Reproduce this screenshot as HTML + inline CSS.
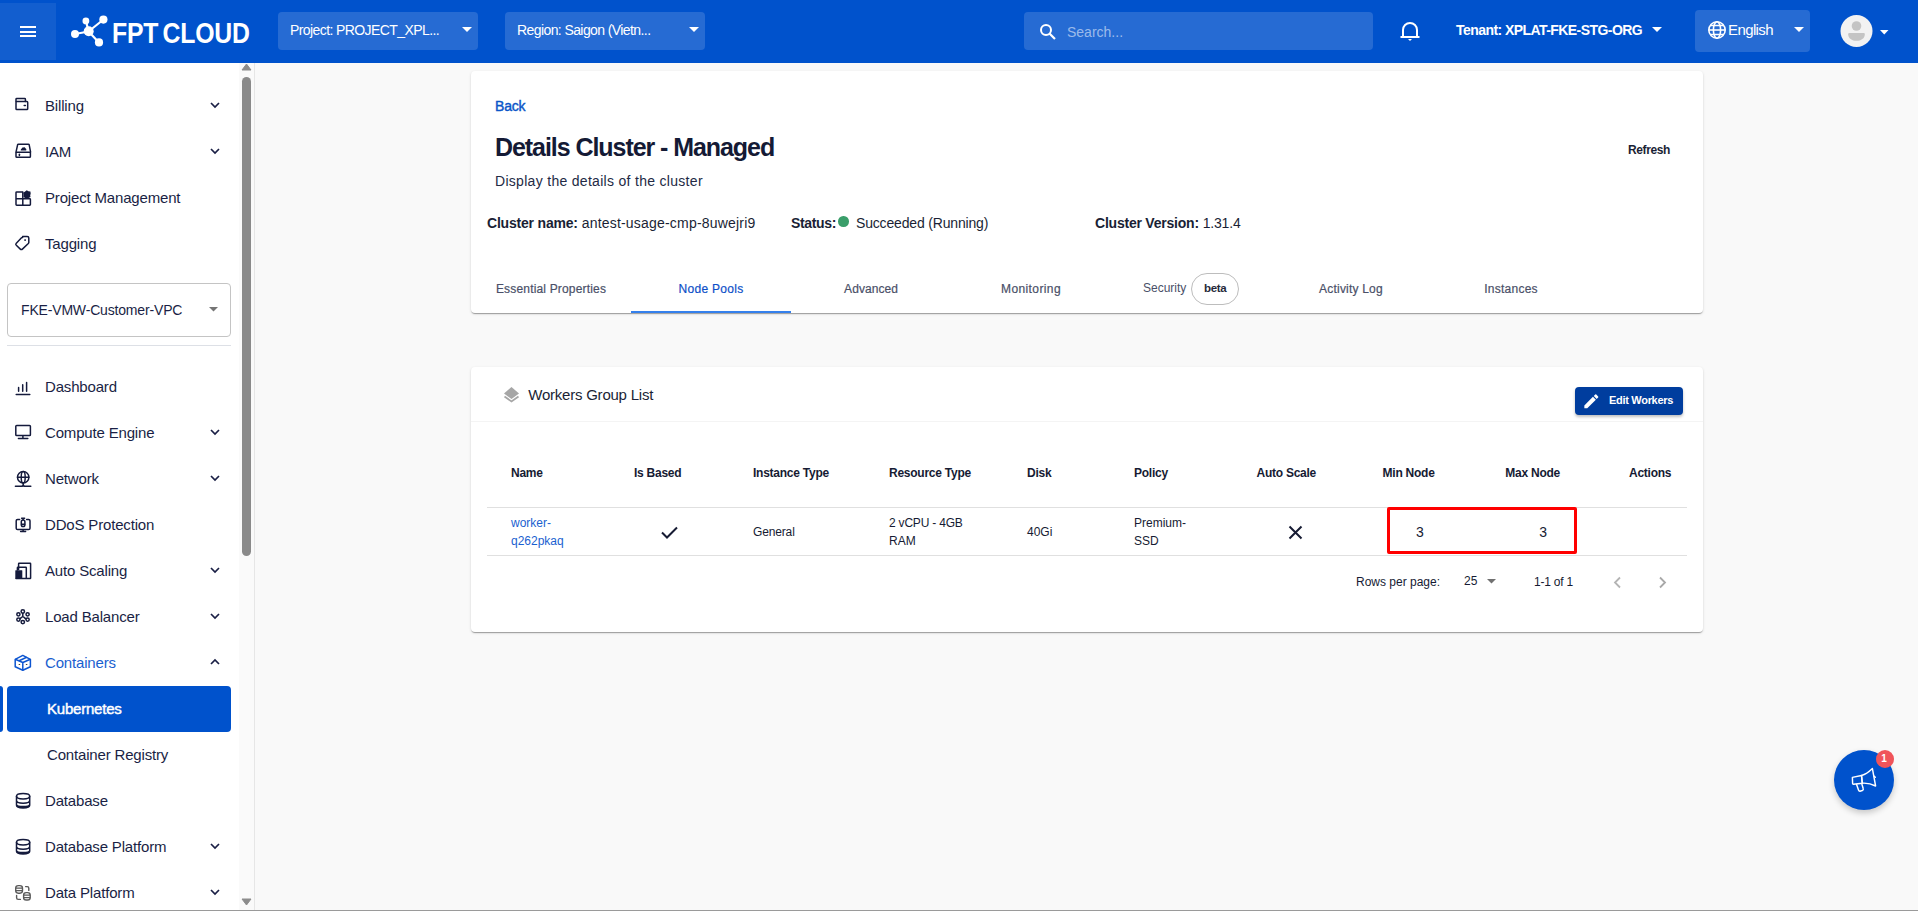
<!DOCTYPE html>
<html><head><meta charset="utf-8"><title>FPT Cloud</title>
<style>
html,body{margin:0;padding:0;width:1918px;height:911px;overflow:hidden;background:#f9f9f9;font-family:"Liberation Sans",sans-serif;}
.a{position:absolute;box-sizing:border-box}
svg.a{box-sizing:content-box;overflow:visible}
.t{position:absolute;white-space:nowrap;line-height:1;font-family:"Liberation Sans",sans-serif}
</style></head><body>
<div class="a" style="left:0px;top:0px;width:1918px;height:63px;background:#0052cc"></div>
<div class="a" style="left:0px;top:3px;width:56px;height:57px;background:rgba(255,255,255,0.07)"></div>
<div class="a" style="left:19.5px;top:26px;width:16px;height:2px;background:#fff"></div>
<div class="a" style="left:19.5px;top:30.5px;width:16px;height:2px;background:#fff"></div>
<div class="a" style="left:19.5px;top:35px;width:16px;height:2px;background:#fff"></div>
<svg class="a" style="left:68px;top:12px" width="44" height="40" viewBox="68 12 44 40">
<g stroke="#fff" stroke-width="2.2" fill="none"><line x1="75" y1="34" x2="88.5" y2="31.5"/><line x1="86" y1="21" x2="88.5" y2="31.5"/><line x1="103.5" y1="19.5" x2="88.5" y2="31.5"/><line x1="99" y1="42.5" x2="88.5" y2="31.5"/></g>
<g fill="#fff"><circle cx="75" cy="34" r="4"/><circle cx="88.7" cy="31.3" r="5"/><circle cx="85.9" cy="20.9" r="3.4"/><circle cx="103.4" cy="19.6" r="4.1"/><circle cx="99" cy="42.4" r="4.1"/></g></svg>
<div class="t" style="left:112.0px;top:18.8px;font-size:29px;font-weight:700;color:#fff;letter-spacing:-0.2px;transform:scaleX(0.855);transform-origin:0 0;word-spacing:-3px;">FPT CLOUD</div>
<div class="a" style="left:278px;top:12px;width:200px;height:37.5px;background:rgba(255,255,255,0.15);border-radius:4px"></div>
<div class="t" style="left:290.0px;top:23.1px;font-size:14px;font-weight:400;color:#fff;letter-spacing:-0.59px;">Project: PROJECT_XPL...</div>
<svg class="a" style="left:462px;top:27px" width="10" height="6"><path d="M0 0h10L5 5z" fill="#fff"/></svg>
<div class="a" style="left:505px;top:12px;width:200px;height:37.5px;background:rgba(255,255,255,0.15);border-radius:4px"></div>
<div class="t" style="left:517.0px;top:23.1px;font-size:14px;font-weight:400;color:#fff;letter-spacing:-0.59px;">Region: Saigon (Vietn...</div>
<svg class="a" style="left:689px;top:27px" width="10" height="6"><path d="M0 0h10L5 5z" fill="#fff"/></svg>
<div class="a" style="left:1024px;top:12px;width:349px;height:37.5px;background:rgba(255,255,255,0.15);border-radius:4px"></div>
<svg class="a" style="left:1039px;top:23px" width="18" height="18" viewBox="0 0 18 18"><circle cx="7" cy="7" r="5" stroke="#fff" stroke-width="2" fill="none"/><line x1="10.5" y1="10.5" x2="16" y2="16" stroke="#fff" stroke-width="2.2"/></svg>
<div class="t" style="left:1067.0px;top:25.1px;font-size:14px;font-weight:400;color:rgba(255,255,255,0.55);letter-spacing:0px;">Search...</div>
<svg class="a" style="left:1399px;top:20px" width="22" height="22" viewBox="0 0 22 22"><path d="M4 17V10a7 7 0 0 1 14 0v7" stroke="#fff" stroke-width="2" fill="none"/><line x1="1.5" y1="17" x2="20.5" y2="17" stroke="#fff" stroke-width="2"/><path d="M9 19h4l-2 2z" fill="#fff"/></svg>
<div class="t" style="left:1456.0px;top:23.1px;font-size:14px;font-weight:700;color:#fff;letter-spacing:-0.56px;">Tenant: XPLAT-FKE-STG-ORG</div>
<svg class="a" style="left:1652px;top:27px" width="10" height="6"><path d="M0 0h10L5 5z" fill="#fff"/></svg>
<div class="a" style="left:1695px;top:10px;width:115px;height:42px;background:rgba(255,255,255,0.15);border-radius:4px"></div>
<svg class="a" style="left:1707.4px;top:20.3px" width="20" height="20" viewBox="0 0 20 20"><g stroke="#fff" stroke-width="1.6" fill="none"><circle cx="10" cy="10" r="8.2"/><ellipse cx="10" cy="10" rx="3.6" ry="8.2"/><line x1="1.8" y1="10" x2="18.2" y2="10"/><path d="M3 5.5h14M3 14.5h14"/></g></svg>
<div class="t" style="left:1728.0px;top:21.6px;font-size:15px;font-weight:400;color:#fff;letter-spacing:-0.6px;">English</div>
<svg class="a" style="left:1794px;top:27px" width="10" height="6"><path d="M0 0h10L5 5z" fill="#fff"/></svg>
<svg class="a" style="left:1840px;top:15px" width="33" height="33" viewBox="0 0 33 33"><circle cx="16.5" cy="16" r="16" fill="#f2f2f2"/><circle cx="16.5" cy="11" r="4.8" fill="#c4c4c4"/><path d="M9 18h15c0 0 .8 .2 .8 1.2c0 4.2-3.7 6.6-8.3 6.6s-8.3-2.4-8.3-6.6c0-1 .8-1.2.8-1.2z" fill="#c4c4c4"/></svg>
<svg class="a" style="left:1879.5px;top:29.5px" width="10" height="6"><path d="M0 0h8.5L4.25 4.5z" fill="#fff"/></svg>
<div class="a" style="left:0px;top:63px;width:254px;height:847px;background:#fff"></div>
<div class="a" style="left:239px;top:63px;width:15px;height:847px;background:#fafafa"></div>
<div class="a" style="left:254px;top:63px;width:1px;height:847px;background:#e6e6e6"></div>
<svg class="a" style="left:241px;top:63.2px" width="11" height="8"><path d="M1 7h9L5.5 1z" fill="#8c8c8c" stroke="#8c8c8c" stroke-linejoin="round"/></svg>
<svg class="a" style="left:241px;top:898px" width="11" height="8"><path d="M1 1h9L5.5 7z" fill="#8c8c8c" stroke="#8c8c8c" stroke-linejoin="round"/></svg>
<div class="a" style="left:242px;top:77px;width:9px;height:479px;background:#8a8a8a;border-radius:4.5px"></div>
<div class="t" style="left:45.0px;top:98.3px;font-size:15px;font-weight:400;color:#1a1f45;letter-spacing:-0.17px;">Billing</div>
<svg class="a" style="left:210px;top:101.5px" width="10" height="7"><path d="M1 1L5 5L9 1" stroke="#1a1f45" stroke-width="1.7" fill="none"/></svg>
<div class="t" style="left:45.0px;top:144.3px;font-size:15px;font-weight:400;color:#1a1f45;letter-spacing:-0.17px;">IAM</div>
<svg class="a" style="left:210px;top:147.5px" width="10" height="7"><path d="M1 1L5 5L9 1" stroke="#1a1f45" stroke-width="1.7" fill="none"/></svg>
<div class="t" style="left:45.0px;top:190.3px;font-size:15px;font-weight:400;color:#1a1f45;letter-spacing:-0.17px;">Project Management</div>
<div class="t" style="left:45.0px;top:236.3px;font-size:15px;font-weight:400;color:#1a1f45;letter-spacing:-0.17px;">Tagging</div>
<div class="t" style="left:45.0px;top:379.3px;font-size:15px;font-weight:400;color:#1a1f45;letter-spacing:-0.17px;">Dashboard</div>
<div class="t" style="left:45.0px;top:425.3px;font-size:15px;font-weight:400;color:#1a1f45;letter-spacing:-0.17px;">Compute Engine</div>
<svg class="a" style="left:210px;top:428.5px" width="10" height="7"><path d="M1 1L5 5L9 1" stroke="#1a1f45" stroke-width="1.7" fill="none"/></svg>
<div class="t" style="left:45.0px;top:471.3px;font-size:15px;font-weight:400;color:#1a1f45;letter-spacing:-0.17px;">Network</div>
<svg class="a" style="left:210px;top:474.5px" width="10" height="7"><path d="M1 1L5 5L9 1" stroke="#1a1f45" stroke-width="1.7" fill="none"/></svg>
<div class="t" style="left:45.0px;top:517.3px;font-size:15px;font-weight:400;color:#1a1f45;letter-spacing:-0.17px;">DDoS Protection</div>
<div class="t" style="left:45.0px;top:563.3px;font-size:15px;font-weight:400;color:#1a1f45;letter-spacing:-0.17px;">Auto Scaling</div>
<svg class="a" style="left:210px;top:566.5px" width="10" height="7"><path d="M1 1L5 5L9 1" stroke="#1a1f45" stroke-width="1.7" fill="none"/></svg>
<div class="t" style="left:45.0px;top:609.3px;font-size:15px;font-weight:400;color:#1a1f45;letter-spacing:-0.17px;">Load Balancer</div>
<svg class="a" style="left:210px;top:612.5px" width="10" height="7"><path d="M1 1L5 5L9 1" stroke="#1a1f45" stroke-width="1.7" fill="none"/></svg>
<div class="t" style="left:45.0px;top:793.3px;font-size:15px;font-weight:400;color:#1a1f45;letter-spacing:-0.17px;">Database</div>
<div class="t" style="left:45.0px;top:839.3px;font-size:15px;font-weight:400;color:#1a1f45;letter-spacing:-0.17px;">Database Platform</div>
<svg class="a" style="left:210px;top:842.5px" width="10" height="7"><path d="M1 1L5 5L9 1" stroke="#1a1f45" stroke-width="1.7" fill="none"/></svg>
<div class="t" style="left:45.0px;top:885.3px;font-size:15px;font-weight:400;color:#1a1f45;letter-spacing:-0.17px;">Data Platform</div>
<svg class="a" style="left:210px;top:888.5px" width="10" height="7"><path d="M1 1L5 5L9 1" stroke="#1a1f45" stroke-width="1.7" fill="none"/></svg>
<div class="a" style="left:7px;top:283px;width:224px;height:54px;border:1px solid #c4c4c4;border-radius:4px;background:#fff"></div>
<div class="t" style="left:21.0px;top:303.1px;font-size:14px;font-weight:400;color:#1a1f45;letter-spacing:-0.17px;">FKE-VMW-Customer-VPC</div>
<svg class="a" style="left:208.5px;top:307px" width="9" height="5"><path d="M0 0h9L4.5 4.5z" fill="#757575"/></svg>
<div class="a" style="left:7px;top:345px;width:224px;height:1px;background:#dde0e6"></div>
<svg class="a" style="left:10px;top:90px" width="30" height="30" viewBox="10 90 30 30"><g stroke="#141a3c" fill="none" stroke-width="1.5" stroke-linecap="round" stroke-linejoin="round"><path d="M16 101.5V99.2c0-.4.3-.7.7-.7h8c.4 0 .7.3.7.7v2.3"/><rect x="16" y="101.6" width="11.7" height="7.9" rx=".8"/><path d="M24.2 105.5h1.2"/></g></svg>
<svg class="a" style="left:10px;top:136px" width="30" height="30" viewBox="10 136 30 30"><g stroke="#141a3c" fill="none" stroke-width="1.5" stroke-linecap="round" stroke-linejoin="round"><path d="M16 152.2l1.6-7.4c.1-.4.4-.6.8-.6h10c.4 0 .7.2.8.6l1.4 7.4"/><rect x="16" y="152.2" width="14.4" height="5.1" rx=".8"/><path d="M19.4 154.3v1.2"/></g><path d="M20.8 150.4h5.2c.6 0 .6-2-.6-2.2-.2-1-1.3-1.2-2-.6-.6-.2-1.6.2-1.5 1-.9.2-1.4 1.8-1.1 1.8z" fill="#141a3c"/></svg>
<svg class="a" style="left:10px;top:182px" width="30" height="30" viewBox="10 182 30 30"><g stroke="#141a3c" fill="none" stroke-width="1.5" stroke-linecap="round" stroke-linejoin="round"><path d="M22.8 192v13.3M16 198.8h6.8M16 192.6c0-.4.3-.7.7-.7h5.4c.4 0 .7.3.7.7M16 192.6v11.9c0 .4.3.7.7.7h13c.4 0 .7-.3.7-.7V199.5c0-.4-.3-.7-.7-.7h-7"/></g><path d="M26.8 190.2l1.6 1 2 .4.3 2-.5 1.9 .3 1.6-1.9 1-1.8.6-1.8-.6-1.5-1.4 .1-2 -.3-1.9 1.8-1.2z" fill="#141a3c"/></svg>
<svg class="a" style="left:10px;top:228px" width="30" height="30" viewBox="10 228 30 30"><g stroke="#141a3c" fill="none" stroke-width="1.5" stroke-linecap="round" stroke-linejoin="round"><path d="M22.6 236.4h4.6c.9 0 1.6.7 1.6 1.6v4.4c0 .4-.2.8-.5 1.1l-5.9 5.6c-.6.6-1.5.6-2.1 0l-4-3.8c-.6-.6-.6-1.5 0-2.1l5.2-5.4c.3-.3.7-.4 1.1-.4z"/></g><rect x="24.3" y="239.3" width="1.6" height="1.6" fill="#141a3c"/></svg>
<svg class="a" style="left:10px;top:371px" width="30" height="30" viewBox="10 371 30 30"><g stroke="#141a3c" fill="none" stroke-width="1.5" stroke-linecap="round" stroke-linejoin="round" stroke-width="1.7"><path d="M18.6 387.6v3.6M22.7 384.8v6.4M26.6 382.4v8.8M16.2 394.4h13.6"/></g></svg>
<svg class="a" style="left:10px;top:417px" width="30" height="30" viewBox="10 417 30 30"><g stroke="#141a3c" fill="none" stroke-width="1.5" stroke-linecap="round" stroke-linejoin="round"><rect x="15.8" y="425.4" width="14.6" height="10.2" rx=".9"/><path d="M22.9 435.8v2.5M18.4 438.4h9.4"/></g></svg>
<svg class="a" style="left:10px;top:463px" width="30" height="30" viewBox="10 463 30 30"><g stroke="#141a3c" fill="none" stroke-width="1.5" stroke-linecap="round" stroke-linejoin="round" stroke-width="1.35"><circle cx="23.2" cy="477.3" r="5.7"/><ellipse cx="23.2" cy="477.3" rx="2" ry="5.7"/><path d="M17.5 477.3h11.4M23.2 483v1.4c0 .9-.6 1.9-1.8 1.9h-6M23.2 484.4c0 .9.6 1.9 1.8 1.9h5.8"/></g></svg>
<svg class="a" style="left:10px;top:509px" width="30" height="30" viewBox="10 509 30 30"><g stroke="#141a3c" fill="none" stroke-width="1.5" stroke-linecap="round" stroke-linejoin="round" stroke-width="1.4"><path d="M19.6 519.4h-2c-.8 0-1.4.6-1.4 1.4v7.4c0 .8.6 1.4 1.4 1.4h11c.8 0 1.4-.6 1.4-1.4v-7.4c0-.8-.6-1.4-1.4-1.4h-2M23.1 529.6v2M20.6 531.6h5M21.6 518.2h3M23.1 518.4v1.3"/><rect x="21.3" y="520" width="3.6" height="6.6" rx="1.8"/><path d="M21.6 524.2h3"/></g></svg>
<svg class="a" style="left:10px;top:555px" width="30" height="30" viewBox="10 555 30 30"><g stroke="#141a3c" fill="none" stroke-width="1.5" stroke-linecap="round" stroke-linejoin="round" stroke-width="1.4"><path d="M18.6 569.5v-5.8c0-.3.2-.5.5-.5h11c.3 0 .5.2.5.5v14.3c0 .3-.2.5-.5.5H16"/><path d="M17.4 570v-2.3c0-.3.2-.5.5-.5h7.9c.3 0 .5.2.5.5v10.6"/></g><rect x="15.3" y="570.2" width="7" height="8.4" rx=".5" fill="#141a3c"/></svg>
<svg class="a" style="left:10px;top:601px" width="30" height="30" viewBox="10 601 30 30"><g stroke="#141a3c" fill="none" stroke-width="1.5" stroke-linecap="round" stroke-linejoin="round" stroke-width="1.4"><circle cx="22.8" cy="611.5" r="1.7"/><circle cx="18.4" cy="614.3" r="1.6"/><circle cx="27.6" cy="614.3" r="1.6"/><circle cx="18.4" cy="619.6" r="1.6"/><circle cx="27.6" cy="619.6" r="1.6"/><circle cx="22.8" cy="622.1" r="1.7"/><path d="M22.8 613.2v3.6M20 618.8c1-1 1.8-2 2.8-2s1.8 1 2.8 2"/></g></svg>
<svg class="a" style="left:10px;top:647px" width="30" height="30" viewBox="10 647 30 30"><g stroke="#0d55d0" fill="none" stroke-width="1.5" stroke-linejoin="round"><path d="M22.8 655.4l7.6 3.9v7.5l-7.6 3.5-7.6-3.5v-7.5z"/><path d="M15.2 659.3l7.6 3.2 7.6-3.2M22.8 662.5v7.8M19.1 660.8l7.6-3.5"/></g><g fill="#333"><ellipse cx="19.4" cy="664.5" rx=".9" ry=".6"/><ellipse cx="26.6" cy="664.5" rx=".9" ry=".6"/></g></svg>
<svg class="a" style="left:10px;top:785px" width="30" height="30" viewBox="10 785 30 30"><g stroke="#141a3c" fill="none" stroke-width="1.5" stroke-linecap="round" stroke-linejoin="round" stroke-width="1.45"><ellipse cx="23.1" cy="796.3" rx="6.6" ry="2.7"/><path d="M16.5 796.3v9c0 1.6 3 2.7 6.6 2.7s6.6-1.1 6.6-2.7v-9M16.5 800.5c0 1.6 3 2.7 6.6 2.7s6.6-1.1 6.6-2.7M16.5 804.5c0 1.1 3 2 6.6 2s6.6-.9 6.6-2" transform="translate(0 0)"/></g></svg>
<svg class="a" style="left:10px;top:831px" width="30" height="30" viewBox="10 831 30 30"><g stroke="#141a3c" fill="none" stroke-width="1.5" stroke-linecap="round" stroke-linejoin="round" stroke-width="1.45"><ellipse cx="23.1" cy="842.3" rx="6.6" ry="2.7"/><path d="M16.5 842.3v9c0 1.6 3 2.7 6.6 2.7s6.6-1.1 6.6-2.7v-9M16.5 846.5c0 1.6 3 2.7 6.6 2.7s6.6-1.1 6.6-2.7M16.5 850.5c0 1.1 3 2 6.6 2s6.6-.9 6.6-2" transform="translate(0 0)"/></g></svg>
<svg class="a" style="left:10px;top:877px" width="30" height="30" viewBox="10 877 30 30"><g stroke="#5a5a5a" fill="none" stroke-width="1.4" stroke-linecap="round" stroke-linejoin="round"><rect x="15.7" y="885.6" width="6.8" height="7.6" rx="2.6"/><path d="M16.2 888.1h5.8M16.2 890.6h5.8"/><rect x="23.6" y="892.6" width="6.6" height="7.4" rx="2.6"/><path d="M24.1 895.1h5.6M24.1 897.6h5.6M25.6 886.6h1.6c.9 0 1.6.7 1.6 1.6v2.2M16.6 895.4v2.4c0 .9.7 1.6 1.6 1.6h2.2"/></g></svg>
<div class="t" style="left:45.0px;top:655.3px;font-size:15px;font-weight:400;color:#1a5fd0;letter-spacing:-0.17px;">Containers</div>
<svg class="a" style="left:210px;top:658.5px" width="10" height="7"><path d="M1 5L5 1L9 5" stroke="#1a1f45" stroke-width="1.7" fill="none"/></svg>
<div class="a" style="left:0px;top:686px;width:3px;height:46px;background:#0052cc;border-radius:0 3px 3px 0"></div>
<div class="a" style="left:7px;top:686px;width:224px;height:46px;background:#0052cc;border-radius:4px"></div>
<div class="t" style="left:47.0px;top:701.3px;font-size:15px;font-weight:400;color:#fff;letter-spacing:-0.21px;-webkit-text-stroke:0.45px #fff;">Kubernetes</div>
<div class="t" style="left:47.0px;top:747.3px;font-size:15px;font-weight:400;color:#1a1f45;letter-spacing:-0.17px;">Container Registry</div>
<div class="a" style="left:255px;top:63px;width:1663px;height:847px;background:#f9f9f9"></div>
<div class="a" style="left:0px;top:910px;width:1918px;height:1px;background:#9a9a9a"></div>
<div class="a" style="left:471px;top:71px;width:1232px;height:242px;background:#fff;border-radius:4px;box-shadow:0 2px 1px -1px rgba(0,0,0,.2),0 1px 1px 0 rgba(0,0,0,.14),0 1px 3px 0 rgba(0,0,0,.12);"></div>
<div class="t" style="left:495.0px;top:99.1px;font-size:14px;font-weight:400;color:#0a55c8;letter-spacing:-0.2px;-webkit-text-stroke:0.4px #0a55c8;">Back</div>
<div class="t" style="left:495.0px;top:134.5px;font-size:25px;font-weight:700;color:#141a35;letter-spacing:-1.06px;">Details Cluster - Managed</div>
<div class="t" style="left:495.0px;top:173.9px;font-size:14px;font-weight:400;color:#232a45;letter-spacing:0.3px;">Display the details of the cluster</div>
<div class="t" style="left:1628.0px;top:143.9px;font-size:12px;font-weight:700;color:#1a1f35;letter-spacing:-0.38px;">Refresh</div>
<div class="t" style="left:487.0px;top:216.4px;font-size:14px;font-weight:400;color:#1a1f35;letter-spacing:0px;"><b style="letter-spacing:-0.2px">Cluster name:</b> <span style="letter-spacing:0.2px">antest-usage-cmp-8uwejri9</span></div>
<div class="t" style="left:791.0px;top:216.4px;font-size:14px;font-weight:400;color:#1a1f35;letter-spacing:-0.35px;"><b>Status:</b></div>
<div class="a" style="left:838px;top:216px;width:10.5px;height:10.5px;background:#3a9e6a;border-radius:50%"></div>
<div class="t" style="left:856.0px;top:216.4px;font-size:14px;font-weight:400;color:#1a1f35;letter-spacing:-0.17px;">Succeeded (Running)</div>
<div class="t" style="left:1095.0px;top:216.4px;font-size:14px;font-weight:400;color:#1a1f35;letter-spacing:0px;"><b style="letter-spacing:-0.22px">Cluster Version:</b> <span style="letter-spacing:-0.2px">1.31.4</span></div>
<div class="t" style="left:471px;width:160px;text-align:center;top:283.1px;font-size:12px;color:#4a5068;letter-spacing:0.17px;-webkit-text-stroke:0.2px #4a5068">Essential Properties</div>
<div class="t" style="left:631px;width:160px;text-align:center;top:283.1px;font-size:12px;color:#0d50c8;letter-spacing:0.3px;-webkit-text-stroke:0.2px #0d50c8">Node Pools</div>
<div class="t" style="left:791px;width:160px;text-align:center;top:283.1px;font-size:12px;color:#4a5068;letter-spacing:0.05px;-webkit-text-stroke:0.2px #4a5068">Advanced</div>
<div class="t" style="left:951px;width:160px;text-align:center;top:283.1px;font-size:12px;color:#4a5068;letter-spacing:0.4px;-webkit-text-stroke:0.2px #4a5068">Monitoring</div>
<div class="t" style="left:1143.0px;top:282.1px;font-size:12px;font-weight:400;color:#4a5068;letter-spacing:0px;">Security</div>
<div class="a" style="left:1191px;top:273px;width:48px;height:32px;border:1px solid #bdbdbd;border-radius:16px"></div>
<div class="t" style="left:1204.0px;top:282.5px;font-size:11.5px;font-weight:700;color:#262a3a;letter-spacing:-0.3px;">beta</div>
<div class="t" style="left:1271px;width:160px;text-align:center;top:283.1px;font-size:12px;color:#4a5068;letter-spacing:0.2px;-webkit-text-stroke:0.2px #4a5068">Activity Log</div>
<div class="t" style="left:1431px;width:160px;text-align:center;top:283.1px;font-size:12px;color:#4a5068;letter-spacing:0.25px;-webkit-text-stroke:0.2px #4a5068">Instances</div>
<div class="a" style="left:631px;top:311px;width:160px;height:2px;background:#3580ec"></div>
<div class="a" style="left:471px;top:367px;width:1232px;height:265px;background:#fff;border-radius:4px;box-shadow:0 2px 1px -1px rgba(0,0,0,.2),0 1px 1px 0 rgba(0,0,0,.14),0 1px 3px 0 rgba(0,0,0,.12);"></div>
<svg class="a" style="left:503px;top:386px" width="17" height="18" viewBox="0 0 17 18"><path d="M8.5 1L16 7.5 8.5 13 1 7.5z" fill="#a6a6a6"/><path d="M1.5 10.5l7 5 7-5" stroke="#a6a6a6" stroke-width="1.8" fill="none"/></svg>
<div class="t" style="left:528.3px;top:387.3px;font-size:15px;font-weight:400;color:#1a1f35;letter-spacing:-0.23px;">Workers Group List</div>
<div class="a" style="left:471px;top:421px;width:1232px;height:1px;background:#f4f4f4"></div>
<div class="a" style="left:1575px;top:387px;width:108px;height:28px;background:#003d9e;border-radius:4px;box-shadow:0 2px 3px rgba(0,0,0,.25)"></div>
<svg class="a" style="left:1582.4px;top:391.6px" width="18.7" height="18.7" viewBox="0 0 24 24"><path d="M3 17.25V21h3.75L17.81 9.94l-3.75-3.75L3 17.25zM20.71 7.04a1 1 0 0 0 0-1.41l-2.34-2.34a1 1 0 0 0-1.41 0l-1.83 1.83 3.75 3.75 1.83-1.83z" fill="#fff"/></svg>
<div class="t" style="left:1609.0px;top:394.7px;font-size:11px;font-weight:700;color:#fff;letter-spacing:-0.3px;">Edit Workers</div>
<div class="t" style="left:511.0px;top:466.8px;font-size:12px;font-weight:700;color:#161b33;letter-spacing:-0.25px;">Name</div>
<div class="t" style="left:634.0px;top:466.8px;font-size:12px;font-weight:700;color:#161b33;letter-spacing:-0.25px;">Is Based</div>
<div class="t" style="left:753.0px;top:466.8px;font-size:12px;font-weight:700;color:#161b33;letter-spacing:-0.25px;">Instance Type</div>
<div class="t" style="left:889.0px;top:466.8px;font-size:12px;font-weight:700;color:#161b33;letter-spacing:-0.25px;">Resource Type</div>
<div class="t" style="left:1027.0px;top:466.8px;font-size:12px;font-weight:700;color:#161b33;letter-spacing:-0.25px;">Disk</div>
<div class="t" style="left:1134.0px;top:466.8px;font-size:12px;font-weight:700;color:#161b33;letter-spacing:-0.25px;">Policy</div>
<div class="t" style="left:1256.5px;top:466.8px;font-size:12px;font-weight:700;color:#161b33;letter-spacing:-0.25px;">Auto Scale</div>
<div class="t" style="left:1382.6px;top:466.8px;font-size:12px;font-weight:700;color:#161b33;letter-spacing:-0.25px;">Min Node</div>
<div class="t" style="left:1505.3px;top:466.8px;font-size:12px;font-weight:700;color:#161b33;letter-spacing:-0.25px;">Max Node</div>
<div class="t" style="left:1629.0px;top:466.8px;font-size:12px;font-weight:700;color:#161b33;letter-spacing:-0.25px;">Actions</div>
<div class="a" style="left:487px;top:507px;width:1200px;height:1px;background:#e0e0e0"></div>
<div class="a" style="left:487px;top:555px;width:1200px;height:1px;background:#e0e0e0"></div>
<div class="t" style="left:511.0px;top:516.8px;font-size:12px;font-weight:400;color:#1a5fd0;letter-spacing:0px;">worker-</div>
<div class="t" style="left:511.0px;top:534.8px;font-size:12px;font-weight:400;color:#1a5fd0;letter-spacing:0px;">q262pkaq</div>
<svg class="a" style="left:660px;top:524px" width="19" height="16" viewBox="0 0 19 16"><path d="M2 8.5l5 5L17 3.5" stroke="#161b33" stroke-width="2" fill="none"/></svg>
<div class="t" style="left:753.0px;top:525.8px;font-size:12px;font-weight:400;color:#161b33;letter-spacing:-0.15px;">General</div>
<div class="t" style="left:889.0px;top:516.8px;font-size:12px;font-weight:400;color:#161b33;letter-spacing:-0.2px;">2 vCPU - 4GB</div>
<div class="t" style="left:889.0px;top:534.8px;font-size:12px;font-weight:400;color:#161b33;letter-spacing:0px;">RAM</div>
<div class="t" style="left:1027.0px;top:525.8px;font-size:12px;font-weight:400;color:#161b33;letter-spacing:0px;">40Gi</div>
<div class="t" style="left:1134.0px;top:516.8px;font-size:12px;font-weight:400;color:#161b33;letter-spacing:0px;">Premium-</div>
<div class="t" style="left:1134.0px;top:534.8px;font-size:12px;font-weight:400;color:#161b33;letter-spacing:0px;">SSD</div>
<svg class="a" style="left:1288px;top:525px" width="15" height="15" viewBox="0 0 15 15"><path d="M1.5 1.5l12 12M13.5 1.5l-12 12" stroke="#161b33" stroke-width="2" fill="none"/></svg>
<div class="t" style="left:1416.0px;top:525.3px;font-size:14px;font-weight:400;color:#161b33;letter-spacing:0px;">3</div>
<div class="t" style="left:1539.3px;top:525.3px;font-size:14px;font-weight:400;color:#161b33;letter-spacing:0px;">3</div>
<div class="a" style="left:1387px;top:507px;width:190px;height:47px;border:3px solid #ff0000;box-sizing:border-box;border-radius:2px"></div>
<div class="t" style="left:1356.0px;top:575.8px;font-size:12px;font-weight:400;color:#161b33;letter-spacing:0px;">Rows per page:</div>
<div class="t" style="left:1464.0px;top:574.8px;font-size:12px;font-weight:400;color:#161b33;letter-spacing:0px;">25</div>
<svg class="a" style="left:1486.5px;top:578.5px" width="10" height="6"><path d="M0 0h9L4.5 4.5z" fill="#707070"/></svg>
<div class="t" style="left:1534.0px;top:575.8px;font-size:12px;font-weight:400;color:#161b33;letter-spacing:-0.22px;">1-1 of 1</div>
<svg class="a" style="left:1611.5px;top:576px" width="10" height="13" viewBox="0 0 10 13"><path d="M8 1.5L3 6.5l5 5" stroke="#b4b4b4" stroke-width="1.8" fill="none"/></svg>
<svg class="a" style="left:1657.5px;top:576px" width="10" height="13" viewBox="0 0 10 13"><path d="M2 1.5l5 5-5 5" stroke="#a8a8a8" stroke-width="1.8" fill="none"/></svg>
<div class="a" style="left:1834px;top:750px;width:60px;height:60px;background:#0052cc;border-radius:50%;box-shadow:0 3px 6px rgba(0,0,0,.2)"></div>
<svg class="a" style="left:1845px;top:760px" width="40" height="40" viewBox="1845 760 40 40"><g stroke="#fff" stroke-width="1.45" fill="none" stroke-linejoin="round" stroke-linecap="round"><path d="M1852.4 777.4l9.1-1.9 .8 7.7-8.9 1.1c-.5 0-.8-.3-.8-.7z"/><path d="M1861.5 775.5c4-1 7.6-3.6 10.9-6.9l3.2 17.4c-4.2-2.2-8.5-3.1-13.3-2.8z"/><path d="M1856.6 784.4l1.9 5.6c.3 .9 1.3 1.3 2.2 1l1.6-.5c.8-.3 1.2-1.2.9-2l-1.3-4.2"/><path d="M1874.3 776.3l1 .9"/></g></svg>
<div class="a" style="left:1876px;top:750px;width:18px;height:18px;background:#f0545a;border-radius:50%"></div>
<div class="t" style="left:1881.3px;top:754.1px;font-size:10px;font-weight:700;color:#fff;letter-spacing:0px;">1</div>
</body></html>
